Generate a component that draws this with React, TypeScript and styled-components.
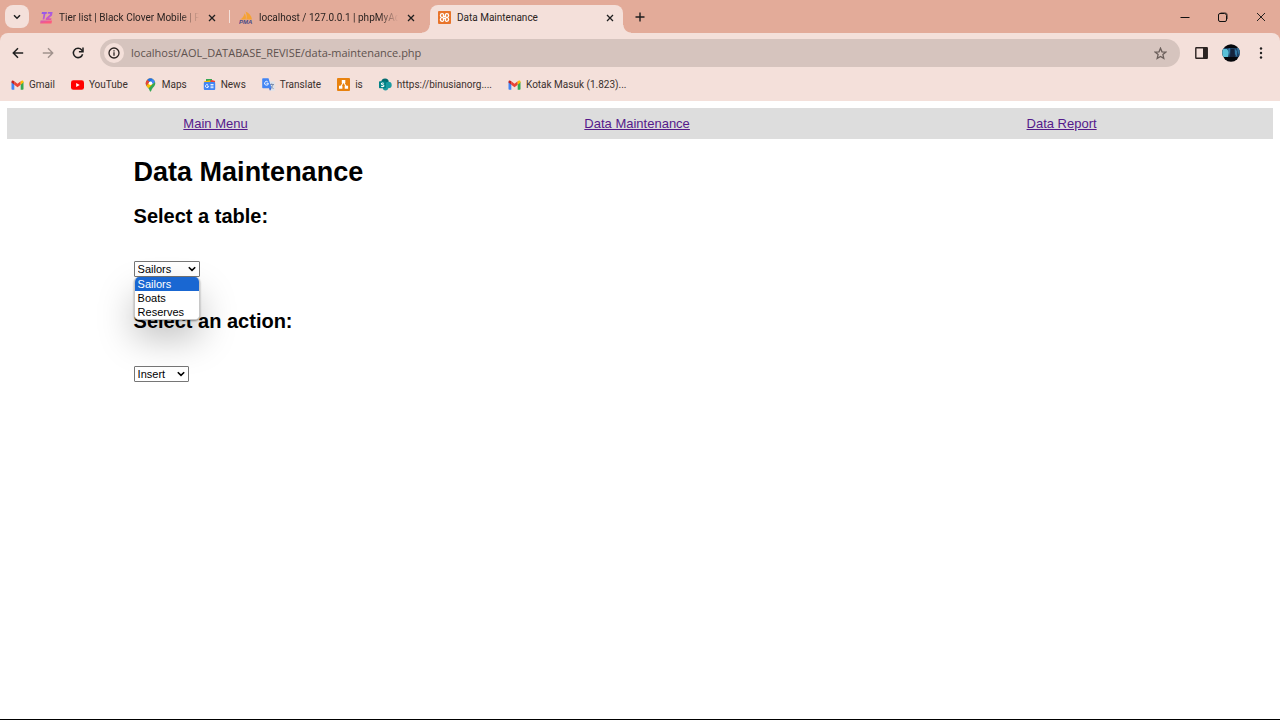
import React from "react";
import styled, { createGlobalStyle } from "styled-components";

const GlobalStyle = createGlobalStyle`
  *, *::before, *::after { box-sizing: border-box; }
  body { margin: 0; background: #fff; }
  button { font: inherit; border: 0; padding: 0; background: none; color: inherit; }
`;

const uiFont = `"Open Sans", "Noto Sans", sans-serif`;
const smallFont = `Roboto, "Open Sans", sans-serif`;
const pageFont = `"Liberation Sans", Arial, sans-serif`;

const Window = styled.div`
  display: flex;
  flex-direction: column;
  min-height: 100vh;
  border-bottom: 1px solid #000;
  font-family: ${smallFont};
  color: #2b2321;
`;

const Chrome = styled.header`
  background: #e3ab99;
`;

const TabStrip = styled.div`
  display: flex;
  align-items: flex-end;
  height: 33px;
  padding-left: 5px;
`;

const TabSearch = styled.button`
  display: flex;
  align-items: center;
  justify-content: center;
  width: 24px;
  height: 23px;
  margin: 0 3px 5px 0;
  border-radius: 8px;
  background: #f4e0da;
`;

const Tab = styled.div<{ $active?: boolean; $divider?: boolean }>`
  position: relative;
  display: flex;
  align-items: center;
  flex: 0 1 193px;
  min-width: 0;
  height: 28px;
  margin-right: 6px;
  padding: 0 6px 3px 8px;
  border-radius: 8px 8px 0 0;
  background: ${(p) => (p.$active ? "#f4e0da" : "transparent")};

  &::before,
  &::after {
    content: "";
    display: ${(p) => (p.$active ? "block" : "none")};
    position: absolute;
    bottom: 0;
    width: 8px;
    height: 8px;
  }
  &::before {
    left: -8px;
    background: radial-gradient(circle at 0 0, transparent 7px, #f4e0da 8px);
  }
  &::after {
    right: -8px;
    background: radial-gradient(circle at 100% 0, transparent 7px, #f4e0da 8px);
  }
  ${(p) =>
    p.$divider &&
    `&::after {
      display: block;
      right: -5px;
      bottom: 10px;
      width: 1px;
      height: 13px;
      background: #f4e0da;
    }`}
`;

const TabTitle = styled.span<{ $fade?: boolean }>`
  flex: 1;
  min-width: 0;
  margin: 0 6px 0 6px;
  overflow: hidden;
  white-space: nowrap;
  font-size: 10px;
  line-height: 16px;
  ${(p) => p.$fade && "mask-image: linear-gradient(to right, #000 86%, transparent);"}
`;

const IconButton = styled.button<{ $size?: number }>`
  display: flex;
  align-items: center;
  justify-content: center;
  flex: none;
  width: ${(p) => p.$size ?? 14}px;
  height: ${(p) => p.$size ?? 14}px;
`;

const NewTab = styled(IconButton)`
  margin: 0 0 9px 4px;
`;

const WindowControls = styled.div`
  display: flex;
  align-self: stretch;
  margin-left: auto;
`;

const WindowButton = styled.button`
  display: flex;
  align-items: center;
  justify-content: center;
  width: 38px;
  height: 33px;
`;

const Toolbar = styled.div`
  display: flex;
  align-items: center;
  height: 40px;
  padding: 0 9px 0 8px;
  border-radius: 8px 8px 0 0;
  background: #f4e0da;
`;

const NavButtons = styled.div`
  display: flex;
  gap: 10px;
  margin-right: 12px;
`;

const AddressBar = styled.div`
  display: flex;
  align-items: center;
  flex: 1;
  height: 28px;
  padding: 0 10px 0 4px;
  border-radius: 14px;
  background: #d6c4be;
`;

const SiteInfo = styled.button`
  display: flex;
  align-items: center;
  justify-content: center;
  width: 20px;
  height: 20px;
  border-radius: 10px;
  background: #f4e0da;
`;

const Address = styled.input`
  flex: 1;
  min-width: 0;
  margin-left: 7px;
  padding: 0;
  border: 0;
  outline: 0;
  background: none;
  color: #5e524e;
  font-family: ${uiFont};
  font-size: 11px;
  line-height: 20px;
`;

const ToolbarActions = styled.div`
  display: flex;
  gap: 10px;
  margin-left: 11px;
`;

const Bookmarks = styled.nav`
  display: flex;
  gap: 16px;
  height: 28px;
  padding: 0 11px 5px;
  background: #f4e0da;
`;

const Bookmark = styled.a`
  display: flex;
  align-items: center;
  gap: 5px;
  color: #3a302d;
  font-size: 10px;
  line-height: 16px;
  text-decoration: none;
  white-space: nowrap;
`;

const Page = styled.main`
  flex: 1;
  padding: 7px;
  background: #fff;
  color: #000;
  font-family: ${pageFont};
`;

const SiteNav = styled.nav`
  display: flex;
  justify-content: space-around;
  padding: 8px;
  background: #ddd;
`;

const SiteLink = styled.a`
  color: #551a8b;
  font-size: 13px;
  line-height: 15px;
`;

const Content = styled.form`
  margin: 18px 10% 0;
`;

const Title = styled.h1`
  margin: 0 0 17px;
  font-size: 27px;
  line-height: 31px;
`;

const Label = styled.label`
  display: block;
  margin-bottom: 33px;
  font-size: 20px;
  font-weight: bold;
  line-height: 23px;
`;

const Field = styled.div`
  margin-bottom: 33px;
`;

const SelectBox = styled.div`
  position: relative;
  width: max-content;
`;

const Select = styled.select<{ $width: number }>`
  appearance: none;
  display: block;
  width: ${(p) => p.$width}px;
  height: 16px;
  padding: 0 3px;
  border: 1px solid #767676;
  border-radius: 1px;
  background: #fff;
  color: #000;
  font-family: ${pageFont};
  font-size: 11px;
  line-height: 14px;
`;

const SelectArrow = styled.svg`
  position: absolute;
  top: 5px;
  right: 4px;
  pointer-events: none;
`;

const Popup = styled.ul`
  position: absolute;
  top: 100%;
  left: 0;
  z-index: 1;
  width: 100%;
  margin: 0;
  padding: 0;
  overflow: hidden;
  border: 1px solid #c8c8c8;
  border-top: 0;
  border-radius: 5px;
  background: #fff;
  box-shadow: 0 1px 2px rgba(0, 0, 0, 0.4), 0 18px 36px rgba(0, 0, 0, 0.25);
  list-style: none;
  font-size: 11px;
`;

const Option = styled.li<{ $selected?: boolean }>`
  padding-left: 3px;
  line-height: 14px;
  background: ${(p) => (p.$selected ? "#1967d2" : "#fff")};
  color: ${(p) => (p.$selected ? "#fff" : "#000")};
`;

const CloseIcon = () => (
  <svg width="8" height="8" viewBox="0 0 8 8" stroke="#1f1f1f" strokeWidth="1.3">
    <path d="M1 1l6 6M7 1L1 7" />
  </svg>
);

const TierIcon = () => (
  <svg width="13" height="13" viewBox="0 0 13 13">
    <defs>
      <linearGradient id="tier" x1="0" y1="0" x2="0.3" y2="1">
        <stop offset="0" stopColor="#8a5cf0" />
        <stop offset="0.6" stopColor="#c05ad0" />
        <stop offset="1" stopColor="#ff5a7c" />
      </linearGradient>
    </defs>
    <path
      fill="url(#tier)"
      d="M2 1h5l-.4 2H5.400L4.400 8.500H2.600L3.600 3H1.600zM8 1h4.600l-.6 3.500-3.200 2.800h2.700l-.3 1.700H5.600l.4-2 3.800-3.200.2-1.100H7.600zM.6 9.500h11.400l-.5 3H.1z"
    />
  </svg>
);

const PmaIcon = () => (
  <svg width="14" height="13" viewBox="0 0 14 13">
    <path d="M1 8.500C3.500 7.500 5 5 5.600 2.200 7 4 7.200 6 6.800 8.500zM7.300 8.500C8 5 7.600 3 6.400 .6 10 1.800 12.400 4.800 13 8.500z" fill="#f5a233" />
    <text x="0" y="12.500" fontFamily="Liberation Sans, sans-serif" fontSize="6" fontWeight="bold" fontStyle="italic" fill="#4a4a86">
      PMA
    </text>
  </svg>
);

const XamppIcon = () => (
  <svg width="13" height="13" viewBox="0 0 13 13">
    <rect width="13" height="13" rx="1" fill="#e8742a" />
    <path
      d="M4.200 2.700C5.400 2.700 5.800 3.500 5.500 4.600L5.300 5.500h2.400L7.500 4.600C7.200 3.500 7.600 2.700 8.800 2.700s1.800.8 1.800 1.800-.6 1.700-1.400 2c.8.3 1.400 1 1.400 2s-.6 1.800-1.800 1.800S7.200 9.500 7.500 8.400L7.700 7.500H5.300l.2.900c.3 1.100-.1 1.900-1.300 1.900s-1.800-.8-1.800-1.800.6-1.700 1.400-2c-.8-.3-1.400-1-1.400-2s.6-1.800 1.800-1.800z"
      fill="none"
      stroke="#fff"
      strokeWidth="1.300"
    />
  </svg>
);

const GmailIcon = () => (
  <svg width="13" height="10" viewBox="0 0 13 10">
    <path d="M.5 1.800L3.300 4v5.800H1.300a.8.8 0 0 1-.8-.8z" fill="#4285f4" />
    <path d="M9.700 4l2.800-2.200V9a.8.8 0 0 1-.8.8h-2z" fill="#34a853" />
    <path d="M3.300 1.300l3.200 2.500 3.200-2.500v3.400L6.500 7.200 3.300 4.700z" fill="#ea4335" />
    <path d="M.5 1.800C.5.300 2 0 3 .9l.3.400v3.400L.5 2.600z" fill="#c5221f" />
    <path d="M12.500 1.800C12.500.300 11 0 10 .9l-.3.400v3.400l2.800-2.100z" fill="#fbbc04" />
  </svg>
);

const YouTubeIcon = () => (
  <svg width="13" height="10" viewBox="0 0 13 10">
    <rect y="0.300" width="13" height="9.400" rx="2.300" fill="#f00" />
    <path d="M5.200 3l3.500 2-3.500 2z" fill="#fff" />
  </svg>
);

const MapsIcon = () => (
  <svg width="13" height="14" viewBox="0 0 13 14">
    <defs>
      <clipPath id="pin">
        <path d="M6.500.5a4.800 4.800 0 0 1 4.800 4.800c0 3.100-3.200 4.200-4.100 7.700-.2.700-1.200.7-1.400 0C4.900 9.500 1.700 8.400 1.700 5.300A4.800 4.800 0 0 1 6.500.5z" />
      </clipPath>
    </defs>
    <g clipPath="url(#pin)">
      <path d="M0 0h13v14H0z" fill="#34a853" />
      <path d="M0 9.800L12 -2v4.500L3 12z" fill="#fbbc04" />
      <path d="M0 0h8.500L1.800 8.500 0 7z" fill="#ea4335" />
      <path d="M4.500 0H13v2L8.500 6.200z" fill="#4285f4" />
      <path d="M4.600 0l4.500.5-3 3.600L3 1.700z" fill="#1a73e8" />
    </g>
    <circle cx="6.500" cy="5.200" r="1.800" fill="#fff" />
  </svg>
);

const NewsIcon = () => (
  <svg width="13" height="13" viewBox="0 0 13 13">
    <path d="M3 1h6v5H3z" fill="#34a853" />
    <path d="M8 1.800l4.200 1.300L11 7 7 6z" fill="#ea4335" />
    <path d="M.8 3.500L7 2.300 8 6 1.500 7.500z" fill="#fbbc04" />
    <rect x="0.800" y="4" width="11.400" height="8" rx="1" fill="#4285f4" />
    <path d="M5.500 8.100H4.200m1.300 0a1.500 1.500 0 1 1-.5-1.100M7.500 6.500h3M7.500 8.100h3M7.500 9.700h3" stroke="#fff" strokeWidth="0.900" fill="none" />
  </svg>
);

const TranslateIcon = () => (
  <svg width="13" height="13" viewBox="0 0 13 13">
    <path d="M5 3.500h7a.8.8 0 0 1 .8.800V12a.8.8 0 0 1-.8.800H8z" fill="#dfe3ea" />
    <path d="M7.500 6.500h4.500M9.700 5.500v1M11 6.500c-.4 1.800-1.500 3-2.800 3.800M8.500 7.500c.5 1.300 1.600 2.300 3 3" stroke="#6c7fa0" strokeWidth="0.800" fill="none" />
    <path d="M1 .3h5.500l3 10H1a.8.8 0 0 1-.8-.8V1.100A.8.800 0 0 1 1 .3z" fill="#4285f4" />
    <path d="M7 10.300h2.500L8 12.700z" fill="#2a56c6" />
    <path d="M4.500 5.300h1.900a1.900 1.900 0 1 1-.6-1.400" stroke="#fff" strokeWidth="0.900" fill="none" />
  </svg>
);

const DiagramIcon = () => (
  <svg width="13" height="13" viewBox="0 0 13 13">
    <rect width="13" height="13" rx="1" fill="#e8820e" />
    <path d="M6.500 4L3.500 9M6.500 4l3 5" stroke="#fff" strokeWidth="1.100" />
    <path d="M4.800 2h3.500v3H4.800zM2 7.800h3.400v3H2zM7.700 7.800h3.400v3H7.700z" fill="#fff" />
  </svg>
);

const SharePointIcon = () => (
  <svg width="13" height="13" viewBox="0 0 14 13">
    <circle cx="6.500" cy="4" r="4" fill="#036c70" />
    <circle cx="10.200" cy="7" r="3.500" fill="#1a9ba1" />
    <circle cx="7" cy="10" r="2.900" fill="#1f9aa0" />
    <rect y="3" width="7.500" height="7.500" rx="0.800" fill="#038387" />
    <path d="M5.300 5.200c-.8-.6-2.800-.6-2.800.5 0 1.300 2.800.7 2.800 2.100 0 1.200-2 1.200-3 .5" stroke="#fff" strokeWidth="1.100" fill="none" />
  </svg>
);

const AvatarIcon = () => (
  <svg width="18" height="18" viewBox="0 0 18 18">
    <defs>
      <clipPath id="avatar">
        <circle cx="9" cy="9" r="8.700" />
      </clipPath>
    </defs>
    <g clipPath="url(#avatar)">
      <path d="M0 0h18v18H0z" fill="#05070b" />
      <path d="M0 4h18v9H0z" fill="#1c3f63" />
      <path d="M0 5h5l2 3-1 5H0z" fill="#59bfd6" />
      <path d="M6 5l2-1v4l-1 4zM13 5l2 2v6l-2-3z" fill="#3479a2" />
      <path d="M9 5h3l1 8H8z" fill="#15243d" />
      <path d="M15 4h3v8l-2-3z" fill="#2f6f98" />
    </g>
  </svg>
);

const tabs = [
  { title: "Tier list | Black Clover Mobile | P", icon: <TierIcon />, fade: true, divider: true },
  { title: "localhost / 127.0.0.1 | phpMyAd", icon: <PmaIcon />, fade: true },
  { title: "Data Maintenance", icon: <XamppIcon />, active: true },
];

const bookmarks = [
  { label: "Gmail", icon: <GmailIcon /> },
  { label: "YouTube", icon: <YouTubeIcon /> },
  { label: "Maps", icon: <MapsIcon /> },
  { label: "News", icon: <NewsIcon /> },
  { label: "Translate", icon: <TranslateIcon /> },
  { label: "is", icon: <DiagramIcon /> },
  { label: "https://binusianorg....", icon: <SharePointIcon /> },
  { label: "Kotak Masuk (1.823)...", icon: <GmailIcon /> },
];

const Arrow = () => (
  <SelectArrow width="8" height="6" viewBox="0 0 8 6" fill="none" stroke="#000" strokeWidth="1.600">
    <path d="M0.800 1.200L4 4.400l3.200-3.200" />
  </SelectArrow>
);

export default function App() {
  return (
    <Window>
      <GlobalStyle />
      <Chrome>
        <TabStrip>
          <TabSearch aria-label="Search tabs">
            <svg width="8" height="6" viewBox="0 0 8 6" fill="none" stroke="#1f1f1f" strokeWidth="1.500">
              <path d="M1 1.200l3 3 3-3" />
            </svg>
          </TabSearch>
          {tabs.map((tab) => (
            <Tab key={tab.title} $active={tab.active} $divider={tab.divider}>
              {tab.icon}
              <TabTitle $fade={tab.fade}>{tab.title}</TabTitle>
              <IconButton aria-label="Close tab">
                <CloseIcon />
              </IconButton>
            </Tab>
          ))}
          <NewTab aria-label="New tab">
            <svg width="10" height="10" viewBox="0 0 10 10" stroke="#1f1f1f" strokeWidth="1.400">
              <path d="M5 .5v9M.5 5h9" />
            </svg>
          </NewTab>
          <WindowControls>
            <WindowButton aria-label="Minimize">
              <svg width="10" height="10" viewBox="0 0 10 10" stroke="#111">
                <path d="M.5 5.500h9" />
              </svg>
            </WindowButton>
            <WindowButton aria-label="Restore">
              <svg width="10" height="10" viewBox="0 0 10 10" fill="none" stroke="#111">
                <path d="M2 1.500h4.500q2 0 2 2V8q0 1.500-1.500 1.500H2Q.5 9.500.5 8V3Q.5 1.500 2 1.500z" />
                <path d="M2.500 .8h4.500q2.300 0 2.300 2.300v4" strokeWidth="0.600" />
              </svg>
            </WindowButton>
            <WindowButton aria-label="Close">
              <svg width="10" height="10" viewBox="0 0 10 10" stroke="#111" strokeWidth="0.900">
                <path d="M1 1l8 8M9 1L1 9" />
              </svg>
            </WindowButton>
          </WindowControls>
        </TabStrip>

        <Toolbar>
          <NavButtons>
            <IconButton $size={20} aria-label="Back">
              <svg width="12" height="12" viewBox="0 0 12 12" fill="none" stroke="#1f1f1f" strokeWidth="1.500">
                <path d="M11.200 6H1.500M6 1.300L1.300 6 6 10.700" />
              </svg>
            </IconButton>
            <IconButton $size={20} aria-label="Forward">
              <svg width="12" height="12" viewBox="0 0 12 12" fill="none" stroke="#a0928d" strokeWidth="1.400">
                <path d="M.8 6h9.700M6 1.300L10.700 6 6 10.700" />
              </svg>
            </IconButton>
            <IconButton $size={20} aria-label="Reload">
              <svg width="12" height="12" viewBox="0 0 12 12" fill="none" stroke="#1f1f1f" strokeWidth="1.500">
                <path d="M10.600 7.200A4.700 4.700 0 1 1 9.700 2.900L10.600 4" />
                <path d="M11 .6v4.100H6.900" />
              </svg>
            </IconButton>
          </NavButtons>
          <AddressBar>
            <SiteInfo aria-label="Site information">
              <svg width="12" height="12" viewBox="0 0 12 12" fill="none" stroke="#2b2321" strokeWidth="1.300">
                <circle cx="6" cy="6" r="5" />
                <path d="M6 5.300v3.400M6 3.200v1.200" />
              </svg>
            </SiteInfo>
            <Address aria-label="Address" defaultValue="localhost/AOL_DATABASE_REVISE/data-maintenance.php" />
            <IconButton $size={20} aria-label="Bookmark this page">
              <svg width="13" height="13" viewBox="0 0 13 13" fill="none" stroke="#6b5f5b" strokeWidth="1.300">
                <path d="M6.500 1.200l1.500 3.600 3.900.3-3 2.500.9 3.800-3.300-2-3.300 2 .9-3.800-3-2.500 3.900-.3z" />
              </svg>
            </IconButton>
          </AddressBar>
          <ToolbarActions>
            <IconButton $size={20} aria-label="Side panel">
              <svg width="13" height="12" viewBox="0 0 13 12">
                <rect x="0.800" y="0.800" width="11.400" height="10.400" rx="0.500" fill="none" stroke="#2b2321" strokeWidth="1.400" />
                <path d="M8 .5h4.500v11H8z" fill="#2b2321" />
              </svg>
            </IconButton>
            <IconButton $size={20} aria-label="Profile">
              <AvatarIcon />
            </IconButton>
            <IconButton $size={20} aria-label="Menu">
              <svg width="4" height="12" viewBox="0 0 4 12" fill="#1f1f1f">
                <circle cx="2" cy="1.500" r="1.200" />
                <circle cx="2" cy="6" r="1.200" />
                <circle cx="2" cy="10.500" r="1.200" />
              </svg>
            </IconButton>
          </ToolbarActions>
        </Toolbar>

        <Bookmarks aria-label="Bookmarks">
          {bookmarks.map((item) => (
            <Bookmark key={item.label} href="#">
              {item.icon}
              {item.label}
            </Bookmark>
          ))}
        </Bookmarks>
      </Chrome>

      <Page>
        <SiteNav aria-label="Site">
          <SiteLink href="#">Main Menu</SiteLink>
          <SiteLink href="#">Data Maintenance</SiteLink>
          <SiteLink href="#">Data Report</SiteLink>
        </SiteNav>
        <Content>
          <Title>Data Maintenance</Title>
          <Field>
            <Label htmlFor="table">Select a table:</Label>
            <SelectBox>
              <Select id="table" $width={66} defaultValue="Sailors">
                <option>Sailors</option>
                <option>Boats</option>
                <option>Reserves</option>
              </Select>
              <Arrow />
              <Popup role="listbox" aria-label="Tables">
                <Option role="option" aria-selected $selected>
                  Sailors
                </Option>
                <Option role="option" aria-selected={false}>Boats</Option>
                <Option role="option" aria-selected={false}>Reserves</Option>
              </Popup>
            </SelectBox>
          </Field>
          <Field>
            <Label htmlFor="action">Select an action:</Label>
            <SelectBox>
              <Select id="action" $width={55} defaultValue="Insert">
                <option>Insert</option>
              </Select>
              <Arrow />
            </SelectBox>
          </Field>
        </Content>
      </Page>
    </Window>
  );
}
